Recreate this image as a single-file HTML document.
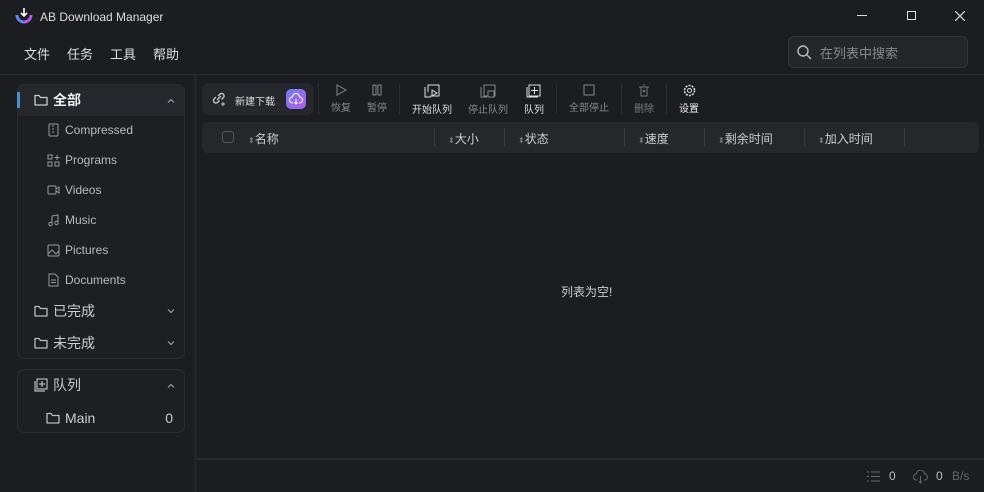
<!DOCTYPE html><html><head><meta charset="utf-8"><style>
*{box-sizing:border-box;margin:0;padding:0}
body{width:984px;height:492px;background:#1c1d21;font-family:"Liberation Sans","Noto Sans CJK SC",sans-serif;color:#ddd;position:relative;overflow:hidden;font-size:13px}
.a{position:absolute}
.menu span{margin-right:17px;font-size:13px;color:#ddd}
.box{border:1px solid #2a2b30;border-radius:7px;background:#1e1f23}
.row{position:absolute;left:0;right:0;height:30px;display:flex;align-items:center;font-size:12px;color:#bbb}
.row svg{flex:none}
.tb{position:absolute;top:84px;text-align:center;font-size:10px;color:#888}
.tb svg{display:block;margin:0 auto 3px}
.hd{position:absolute;top:130px;font-size:12px;color:#ccc}
.sep{position:absolute;top:128px;width:1px;height:18px;background:#3a3b40}
.chev{position:absolute;right:10px}
</style></head><body>
<svg class="a" style="left:14px;top:7px" width="20" height="18" viewBox="0 0 20 18"><defs><linearGradient id="g" x1="0" x2="1"><stop offset="0" stop-color="#4f8cf7"/><stop offset="1" stop-color="#c94cf0"/></linearGradient></defs><path d="M3 8a7 7 0 0 0 14 0" stroke="url(#g)" stroke-width="3" fill="none"/><path d="M10 1v8M7 6l3 3 3-3" stroke="#fff" stroke-width="1.6" fill="none"/></svg>
<div class="a" style="left:40px;top:10px;font-size:12px;color:#ddd">AB Download Manager</div>
<div class="a" style="left:857px;top:15px;width:10px;height:1px;background:#ddd"></div>
<div class="a" style="left:907px;top:11px;width:9px;height:9px;border:1px solid #ddd"></div>
<svg class="a" style="left:955px;top:11px" width="10" height="10"><path d="M0 0l10 10M10 0L0 10" stroke="#ddd" stroke-width="1.2"/></svg>
<div class="a menu" style="left:24px;top:44px"><span>文件</span><span>任务</span><span>工具</span><span>帮助</span></div>
<div class="a" style="left:788px;top:36px;width:180px;height:32px;border:1px solid #34353a;border-radius:6px;background:#25262a"></div>
<svg class="a" style="left:796px;top:44px" width="16" height="16"><circle cx="7" cy="7" r="5" stroke="#bbb" stroke-width="1.4" fill="none"/><path d="M11 11l4 4" stroke="#bbb" stroke-width="1.4"/></svg>
<div class="a" style="left:820px;top:43px;font-size:13px;color:#888">在列表中搜索</div>
<div class="a" style="left:0;top:74px;width:984px;height:1px;background:#2a2b30"></div>
<div class="a" style="left:194px;top:75px;width:3px;height:417px;background:#232428"></div>
<div class="a box" style="left:17px;top:84px;width:168px;height:275px"></div>
<div class="a" style="left:18px;top:85px;width:166px;height:31px;background:#26272c;border-radius:6px 6px 0 0"></div>
<div class="a" style="left:17px;top:92px;width:3px;height:16px;background:#4a90c8"></div>
<div class="a" style="left:17px;top:84px;width:168px">
<div class="row" style="top:1px;font-size:14px;font-weight:bold;color:#eee"><svg style="margin-left:17px;margin-right:5px" width="14" height="12"><path d="M1 1.5h4l1.5 2H13v7.5H1z" stroke="#ccc" stroke-width="1.3" fill="none" stroke-linejoin="round"/></svg>全部<svg class="chev" width="8" height="5"><path d="M1 4.5l3-3 3 3" stroke="#aaa" fill="none"/></svg></div>
<div class="row" style="top:31px"><svg style="margin-left:30px;margin-right:5px" width="13" height="14"><rect x="2" y="1" width="9" height="12" rx="1" stroke="#999" fill="none"/><path d="M6 2v2M6 5v2M6 8v2" stroke="#999"/></svg>Compressed</div>
<div class="row" style="top:61px"><svg style="margin-left:30px;margin-right:5px" width="13" height="13"><rect x="1" y="1" width="4" height="4" stroke="#999" fill="none"/><rect x="1" y="8" width="4" height="4" stroke="#999" fill="none"/><rect x="8" y="8" width="4" height="4" stroke="#999" fill="none"/><path d="M10 1v5M7.5 3.5h5" stroke="#999"/></svg>Programs</div>
<div class="row" style="top:91px"><svg style="margin-left:30px;margin-right:5px" width="13" height="12"><rect x="1" y="2" width="8" height="8" rx="1" stroke="#999" fill="none"/><path d="M9 5l3-2v6l-3-2" stroke="#999" fill="none"/></svg>Videos</div>
<div class="row" style="top:121px"><svg style="margin-left:30px;margin-right:5px" width="13" height="13"><path d="M5 10V2l6-1v8" stroke="#999" fill="none"/><circle cx="3.5" cy="10" r="1.7" stroke="#999" fill="none"/><circle cx="9.5" cy="9" r="1.7" stroke="#999" fill="none"/></svg>Music</div>
<div class="row" style="top:151px"><svg style="margin-left:30px;margin-right:5px" width="13" height="13"><rect x="1" y="1" width="11" height="11" rx="1" stroke="#999" fill="none"/><path d="M1 10l4-4 4 4 3-3" stroke="#999" fill="none"/></svg>Pictures</div>
<div class="row" style="top:181px"><svg style="margin-left:30px;margin-right:5px" width="13" height="14"><path d="M2 1h6l3 3v9H2z" stroke="#999" fill="none"/><path d="M4 7h5M4 9.5h5" stroke="#999"/></svg>Documents</div>
<div class="row" style="top:212px;font-size:14px;color:#ccc"><svg style="margin-left:17px;margin-right:5px" width="14" height="12"><path d="M1 1.5h4l1.5 2H13v7.5H1z" stroke="#bbb" stroke-width="1.3" fill="none" stroke-linejoin="round"/></svg>已完成<svg class="chev" width="8" height="5"><path d="M1 .5l3 3 3-3" stroke="#aaa" fill="none"/></svg></div>
<div class="row" style="top:244px;font-size:14px;color:#ccc"><svg style="margin-left:17px;margin-right:5px" width="14" height="12"><path d="M1 1.5h4l1.5 2H13v7.5H1z" stroke="#bbb" stroke-width="1.3" fill="none" stroke-linejoin="round"/></svg>未完成<svg class="chev" width="8" height="5"><path d="M1 .5l3 3 3-3" stroke="#aaa" fill="none"/></svg></div>
</div>
<div class="a box" style="left:17px;top:369px;width:168px;height:64px"></div>
<div class="row" style="left:17px;width:168px;top:370px;font-size:14px;color:#ccc"><svg style="margin-left:17px;margin-right:5px" width="14" height="14"><rect x="3" y="1" width="10" height="10" stroke="#bbb" stroke-width="1.2" fill="none"/><path d="M8 3v6M5 6h6M1 3v10h10" stroke="#bbb" stroke-width="1.2" fill="none"/></svg>队列<svg class="chev" width="8" height="5"><path d="M1 4.5l3-3 3 3" stroke="#aaa" fill="none"/></svg></div>
<div class="row" style="left:17px;width:168px;top:403px;font-size:14px;color:#ccc"><svg style="margin-left:29px;margin-right:5px" width="14" height="12"><path d="M1 1.5h4l1.5 2H13v7.5H1z" stroke="#bbb" stroke-width="1.3" fill="none" stroke-linejoin="round"/></svg>Main<span style="position:absolute;right:12px">0</span></div>
<div class="a" style="left:202px;top:83px;width:112px;height:32px;background:#26272c;border-radius:7px"></div>
<svg class="a" style="left:210px;top:90px" width="17" height="17"><path d="M7 10l4-4M6 7L4 9a2.5 2.5 0 0 0 3.5 3.5L9.5 10.5M8 6l2-2a2.5 2.5 0 0 1 3.5 3.5L11.5 9.5" stroke="#ccc" stroke-width="1.3" fill="none"/><path d="M13 12v4M11 14h4" stroke="#ccc"/></svg>
<div class="a" style="left:235px;top:93px;font-size:10px;color:#ddd">新建下载</div>
<div class="a" style="left:286px;top:89px;width:20px;height:20px;border-radius:5px;background:linear-gradient(135deg,#6f7cf2,#b05ee8)"></div>
<svg class="a" style="left:289px;top:93px" width="14" height="12"><path d="M4 10H3.5a3 3 0 0 1 0-6 3.5 3.5 0 0 1 7 0 3 3 0 0 1 0 6H10M7 6v5M5.5 9.5L7 11l1.5-1.5" stroke="#fff" fill="none"/></svg>
<div class="a" style="left:318px;top:84px;width:1px;height:30px;background:#2c2d32"></div>
<div class="tb" style="left:330px;width:22px"><svg width="12" height="12"><path d="M2 1l9 5-9 5z" stroke="#888" fill="none"/></svg>恢复</div>
<div class="tb" style="left:366px;width:22px"><svg width="12" height="12"><rect x="2" y="1" width="3" height="10" stroke="#888" fill="none"/><rect x="7" y="1" width="3" height="10" stroke="#888" fill="none"/></svg>暂停</div>
<div class="a" style="left:399px;top:84px;width:1px;height:30px;background:#2c2d32"></div>
<div class="tb" style="left:411px;width:42px;color:#ddd"><svg width="16" height="14"><rect x="4" y="1" width="11" height="11" stroke="#ddd" fill="none"/><path d="M1 3v10h6M8 6l5 3-5 3z" stroke="#ddd" fill="#26272b"/></svg>开始队列</div>
<div class="tb" style="left:467px;width:42px"><svg width="16" height="14"><rect x="4" y="1" width="11" height="11" stroke="#888" fill="none"/><path d="M1 3v10h6" stroke="#888" fill="none"/><rect x="8" y="7" width="6" height="6" stroke="#888" fill="#1c1d21"/></svg>停止队列</div>
<div class="tb" style="left:522px;width:24px;color:#ddd"><svg width="16" height="14"><rect x="3" y="1" width="11" height="11" stroke="#ddd" fill="none"/><path d="M8.5 3v7M5 6.5h7M1 3v10h11" stroke="#ddd" fill="none"/></svg>队列</div>
<div class="a" style="left:556px;top:84px;width:1px;height:30px;background:#2c2d32"></div>
<div class="tb" style="left:568px;width:42px"><svg width="12" height="12"><rect x="1" y="1" width="10" height="10" stroke="#888" fill="none"/></svg>全部停止</div>
<div class="a" style="left:621px;top:84px;width:1px;height:30px;background:#2c2d32"></div>
<div class="tb" style="left:633px;width:22px;color:#777"><svg width="12" height="13"><path d="M1 3h10M3 3v9h6V3M5 1h2M5 6l2 2M7 6l-2 2" stroke="#777" fill="none"/></svg>删除</div>
<div class="a" style="left:666px;top:84px;width:1px;height:30px;background:#2c2d32"></div>
<div class="tb" style="left:678px;width:22px;color:#eee"><svg width="13" height="13"><circle cx="6.5" cy="6.5" r="5" stroke="#ddd" stroke-dasharray="2 1.2" stroke-width="1.6" fill="none"/><circle cx="6.5" cy="6.5" r="2" stroke="#ddd" fill="none"/></svg>设置</div>
<div class="a" style="left:202px;top:122px;width:777px;height:31px;background:#26272b;border-radius:6px"></div>
<div class="a" style="left:222px;top:131px;width:12px;height:12px;border:1px solid #555;border-radius:3px"></div>
<div class="hd" style="left:248px"><span style="font-size:8px;color:#777">⬍</span>名称</div>
<div class="sep" style="left:434px"></div><div class="hd" style="left:448px"><span style="font-size:8px;color:#777">⬍</span>大小</div>
<div class="sep" style="left:504px"></div><div class="hd" style="left:518px"><span style="font-size:8px;color:#777">⬍</span>状态</div>
<div class="sep" style="left:624px"></div><div class="hd" style="left:638px"><span style="font-size:8px;color:#777">⬍</span>速度</div>
<div class="sep" style="left:704px"></div><div class="hd" style="left:718px"><span style="font-size:8px;color:#777">⬍</span>剩余时间</div>
<div class="sep" style="left:804px"></div><div class="hd" style="left:818px"><span style="font-size:8px;color:#777">⬍</span>加入时间</div>
<div class="sep" style="left:904px"></div>
<div class="a" style="left:561px;top:283px;font-size:12px;color:#ccc">列表为空!</div>
<div class="a" style="left:197px;top:458px;width:787px;height:2px;background:#2a2b30"></div>
<svg class="a" style="left:867px;top:471px" width="13" height="11"><path d="M0 1h2M4 1h9M0 5.5h2M4 5.5h9M0 10h2M4 10h9" stroke="#666"/></svg>
<div class="a" style="left:889px;top:469px;font-size:12px;color:#bbb">0</div>
<svg class="a" style="left:913px;top:470px" width="16" height="14"><path d="M4 10H3.5a3 3 0 0 1 0-6 4 4 0 0 1 8 0 3 3 0 0 1 0 6H11M7.5 6v7M6 11.5l1.5 1.5 1.5-1.5" stroke="#666" fill="none"/></svg>
<div class="a" style="left:936px;top:469px;font-size:12px;color:#bbb">0</div>
<div class="a" style="left:952px;top:469px;font-size:12px;color:#666">B/s</div>
</body></html>
